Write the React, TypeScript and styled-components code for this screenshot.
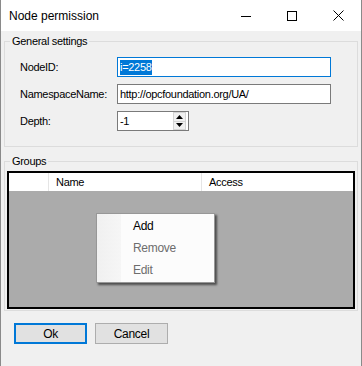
import React from "react";
import styled, { createGlobalStyle } from "styled-components";

const Global = createGlobalStyle`
  html, body { margin: 0; padding: 0; background: #ffffff; }
  * { box-sizing: border-box; }
  body { font-family: "Liberation Sans", Arial, sans-serif; }
`;

const Window = styled.div`
  width: 362px;
  height: 366px;
  border-left: 1px solid #8a8a8a;
  border-right: 1px solid #8a8a8a;
  display: flex;
  flex-direction: column;
  background: #f0f0f0;
  overflow: hidden;
`;

const TitleBar = styled.div`
  height: 31px;
  background: #ffffff;
  display: flex;
  align-items: center;
  flex-shrink: 0;
`;

const Title = styled.div`
  flex: 1;
  padding-left: 8px;
  font-size: 12px;
  color: #000;
`;

const CaptionButton = styled.div`
  width: 46px;
  height: 31px;
  display: flex;
  align-items: center;
  justify-content: center;
`;

const Client = styled.div`
  flex: 1;
  padding: 2px 3px 0;
  display: flex;
  flex-direction: column;
  font-size: 11px;
  letter-spacing: -0.3px;
  color: #000;
`;

const Group = styled.fieldset<{ $gap?: number }>`
  margin: ${(p) => p.$gap ?? 0}px 0 0 0;
  padding: 0;
  border: 1px solid #dcdcdc;
  min-width: 0;
`;

const Legend = styled.legend`
  margin-left: 5px;
  padding: 0 2px;
  line-height: 16px;
  height: 16px;
  font-size: 11px;
`;

const FormGrid = styled.div`
  display: grid;
  grid-template-columns: 97px 214px;
  row-gap: 7px;
  align-items: center;
  padding: 8px 0 15px 15px;
`;

const Label = styled.div`
  line-height: 20px;
`;

const TextBox = styled.div<{ $focused?: boolean; $width?: number }>`
  width: ${(p) => p.$width ?? 214}px;
  height: 20px;
  background: #fff;
  border: 1px solid ${(p) => (p.$focused ? "#0078d7" : "#7a7a7a")};
  padding-left: 2px;
  display: flex;
  align-items: center;
  white-space: nowrap;
  overflow: hidden;
`;

const Selected = styled.span`
  background: #0078d7;
  color: #fff;
  line-height: 15px;
`;

const NumericText = styled.span`
  flex: 1;
`;

const Spinner = styled.div`
  width: 13px;
  height: 18px;
  margin-right: 2px;
  display: flex;
  flex-direction: column;
`;

const SpinButton = styled.div`
  flex: 1;
  background: #f0f0f0;
  border: 1px solid #d4d4d4;
  display: flex;
  align-items: center;
  justify-content: center;
  & + & { border-top: none; }
`;

const DataGrid = styled.div`
  position: relative;
  margin: 2px 2px 1px 2px;
  height: 138px;
  border: 2px solid #000;
  background: #ababab;
`;

const HeaderRow = styled.div`
  display: grid;
  grid-template-columns: 40px 153px 1fr;
  height: 18px;
  background: #fff;
`;

const HeaderCell = styled.div`
  border-right: 1px solid #e5e5e5;
  padding-left: 7px;
  line-height: 18px;
  &:last-child { border-right: none; }
`;

const Menu = styled.div`
  position: absolute;
  left: 87px;
  top: 40px;
  width: 119px;
  height: 70px;
  padding: 1px;
  border: 1px solid #979797;
  background: linear-gradient(to right, #f0f0f0 0px, #f6f6f6 24px, #fcfcfc 24px);
  box-shadow: 2px 2px 2px rgba(0, 0, 0, 0.55);
  font-size: 12px;
  letter-spacing: -0.3px;
`;

const MenuItem = styled.div<{ $disabled?: boolean }>`
  height: 22px;
  line-height: 22px;
  padding-left: 35px;
  color: ${(p) => (p.$disabled ? "#6d6d6d" : "#000")};
`;

const ButtonRow = styled.div`
  display: flex;
  gap: 8px;
  padding: 12px 0 0 10px;
`;

const Button = styled.div<{ $primary?: boolean }>`
  width: 73px;
  height: 21px;
  background: #e1e1e1;
  border: ${(p) => (p.$primary ? "2px solid #0078d7" : "1px solid #adadad")};
  display: flex;
  align-items: center;
  justify-content: center;
  font-size: 12px;
  letter-spacing: -0.3px;
`;

export default function App() {
  return (
    <>
      <Global />
      <Window>
        <TitleBar>
          <Title>Node permission</Title>
          <CaptionButton>
            <svg width="10" height="10" viewBox="0 0 10 10">
              <path d="M0 5.5H10" stroke="#000" strokeWidth="1" />
            </svg>
          </CaptionButton>
          <CaptionButton>
            <svg width="10" height="10" viewBox="0 0 10 10">
              <rect x="0.5" y="0.5" width="9" height="9" fill="none" stroke="#000" strokeWidth="1" />
            </svg>
          </CaptionButton>
          <CaptionButton>
            <svg width="11" height="11" viewBox="0 0 11 11">
              <path d="M0.5 0.5L10.5 10.5M10.5 0.5L0.5 10.5" stroke="#000" strokeWidth="1" />
            </svg>
          </CaptionButton>
        </TitleBar>
        <Client>
          <Group>
            <Legend>General settings</Legend>
            <FormGrid>
              <Label>NodeID:</Label>
              <TextBox $focused>
                <Selected>i=2258</Selected>
              </TextBox>
              <Label>NamespaceName:</Label>
              <TextBox>http://opcfoundation.org/UA/</TextBox>
              <Label>Depth:</Label>
              <TextBox $width={72}>
                <NumericText>-1</NumericText>
                <Spinner>
                  <SpinButton>
                    <svg width="7" height="4" viewBox="0 0 7 4">
                      <path d="M3.5 0L7 4H0Z" fill="#000" />
                    </svg>
                  </SpinButton>
                  <SpinButton>
                    <svg width="7" height="4" viewBox="0 0 7 4">
                      <path d="M0 0H7L3.5 4Z" fill="#000" />
                    </svg>
                  </SpinButton>
                </Spinner>
              </TextBox>
            </FormGrid>
          </Group>
          <Group $gap={6}>
            <Legend>Groups</Legend>
            <DataGrid>
              <HeaderRow>
                <HeaderCell />
                <HeaderCell>Name</HeaderCell>
                <HeaderCell>Access</HeaderCell>
              </HeaderRow>
              <Menu>
                <MenuItem>Add</MenuItem>
                <MenuItem $disabled>Remove</MenuItem>
                <MenuItem $disabled>Edit</MenuItem>
              </Menu>
            </DataGrid>
          </Group>
          <ButtonRow>
            <Button $primary>Ok</Button>
            <Button>Cancel</Button>
          </ButtonRow>
        </Client>
      </Window>
    </>
  );
}
